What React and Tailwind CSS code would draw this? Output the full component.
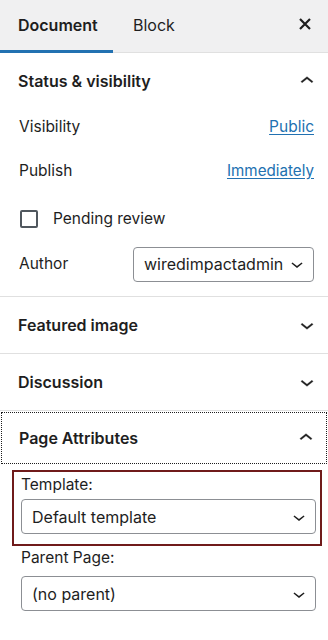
import React from "react";

const ChevronUp = () => (
  <svg viewBox="0 0 24 24" width="26" height="26" fill="#1e1e1e">
    <path d="M6.5 12.4L12 8l5.5 4.4-.9 1.2L12 10l-4.6 3.6-1-1.2z" stroke="#1e1e1e" strokeWidth="0.3" />
  </svg>
);
const ChevronDown = () => (
  <svg viewBox="0 0 24 24" width="26" height="26" fill="#1e1e1e">
    <path d="M17.5 11.6L12 16l-5.5-4.4.9-1.2L12 14l4.6-3.6 1 1.2z" stroke="#1e1e1e" strokeWidth="0.3" />
  </svg>
);
const SmallChevron = () => (
  <svg viewBox="0 0 24 24" width="24" height="24" fill="#1e1e1e">
    <path d="M17.5 11.6L12 16l-5.5-4.4.9-1.2L12 14l4.6-3.6 1 1.2z" />
  </svg>
);

const SectionHeader = ({ title, open, tall = true }) => (
  <div className={`${tall ? "h-[56px]" : "h-[50px]"} flex items-center justify-between pl-[18px] pr-[8px]`}>
    <span className="text-[16px] font-semibold text-[#1e1e1e]">{title}</span>
    {open ? <ChevronUp /> : <ChevronDown />}
  </div>
);

const Select = ({ value, className = "" }) => (
  <div className={`h-[35px] flex items-center justify-between border border-[#8c8f94] rounded-[4px] pl-[10px] pr-[4px] bg-white ${className}`}>
    <span className="text-[16px] text-[#1e1e1e] whitespace-nowrap">{value}</span>
    <SmallChevron />
  </div>
);

export default function App() {
  return (
    <div className="w-[328px] h-[640px] bg-white overflow-hidden" style={{ fontFamily: "Inter, 'Noto Sans', sans-serif" }}>
      {/* Tabs header */}
      <div className="h-[53px] bg-[#f0f0f1] border-b border-[#e0e0e0] flex items-stretch">
        <div className="w-[113px] flex items-center pl-[18px] border-b-[3px] border-[#2271b1] -mb-px">
          <span className="text-[16px] font-semibold text-[#1e1e1e]">Document</span>
        </div>
        <div className="flex items-center pl-[20px] pb-[3px]">
          <span className="text-[16px] text-[#1e1e1e]">Block</span>
        </div>
        <div className="flex-1" />
        <div className="flex items-center pr-[17px] pb-[4px]">
          <svg viewBox="0 0 12 12" width="12" height="12">
            <path d="M1 1L11 11M11 1L1 11" stroke="#1e1e1e" strokeWidth="2.2" strokeLinecap="butt" />
          </svg>
        </div>
      </div>

      {/* Status & visibility */}
      <div className="border-b border-[#e0e0e0]">
        <SectionHeader title="Status & visibility" open />
        <div className="pr-[14px] pb-[14px] pl-[19px]">
          <div className="h-[35px] flex items-center justify-between">
            <span className="text-[15.5px] text-[#1e1e1e]">Visibility</span>
            <span className="text-[15.5px] text-[#2271b1] underline underline-offset-2">Public</span>
          </div>
          <div className="h-[36px] mt-[9px] flex items-center justify-between">
            <span className="text-[15.5px] text-[#1e1e1e]">Publish</span>
            <span className="text-[15.2px] text-[#2271b1] underline underline-offset-2">Immediately</span>
          </div>
          <div className="h-[36px] mt-[12px] flex items-center gap-[15px]">
            <div className="w-[18px] h-[18px] border-2 border-[#50575e] rounded-[2px] ml-px" />
            <span className="text-[15.5px] text-[#1e1e1e]">Pending review</span>
          </div>
          <div className="h-[36px] mt-[9px] flex items-center justify-between">
            <span className="text-[15.5px] text-[#1e1e1e]">Author</span>
            <Select value="wiredimpactadmin" className="w-[181px]" />
          </div>
        </div>
      </div>

      <div className="border-b border-[#e0e0e0]">
        <SectionHeader title="Featured image" open={false} />
      </div>
      <div className="border-b border-[#e0e0e0]">
        <SectionHeader title="Discussion" open={false} />
      </div>

      {/* Page Attributes */}
      <div>
        <div className="mx-px mt-[1px] border border-dotted border-[#1e1e1e]">
          <div className="-ml-px -mr-px">
            <SectionHeader title="Page Attributes" open tall={false} />
          </div>
        </div>
        <div className="pl-[12px] pr-[6px] pt-[6px]">
          <div className="border-2 border-[#701b1b] pl-[7px] pr-[4px] pt-[3px] pb-[10px]">
            <div className="text-[15.5px] text-[#1e1e1e] leading-[20px] mb-[4px]">Template:</div>
            <Select value="Default template" />
          </div>
          <div className="pl-[9px] pr-[6px] pt-[2px]">
            <div className="text-[15.5px] text-[#1e1e1e] leading-[20px] mb-[8px]">Parent Page:</div>
            <Select value="(no parent)" />
          </div>
        </div>
      </div>
    </div>
  );
}
